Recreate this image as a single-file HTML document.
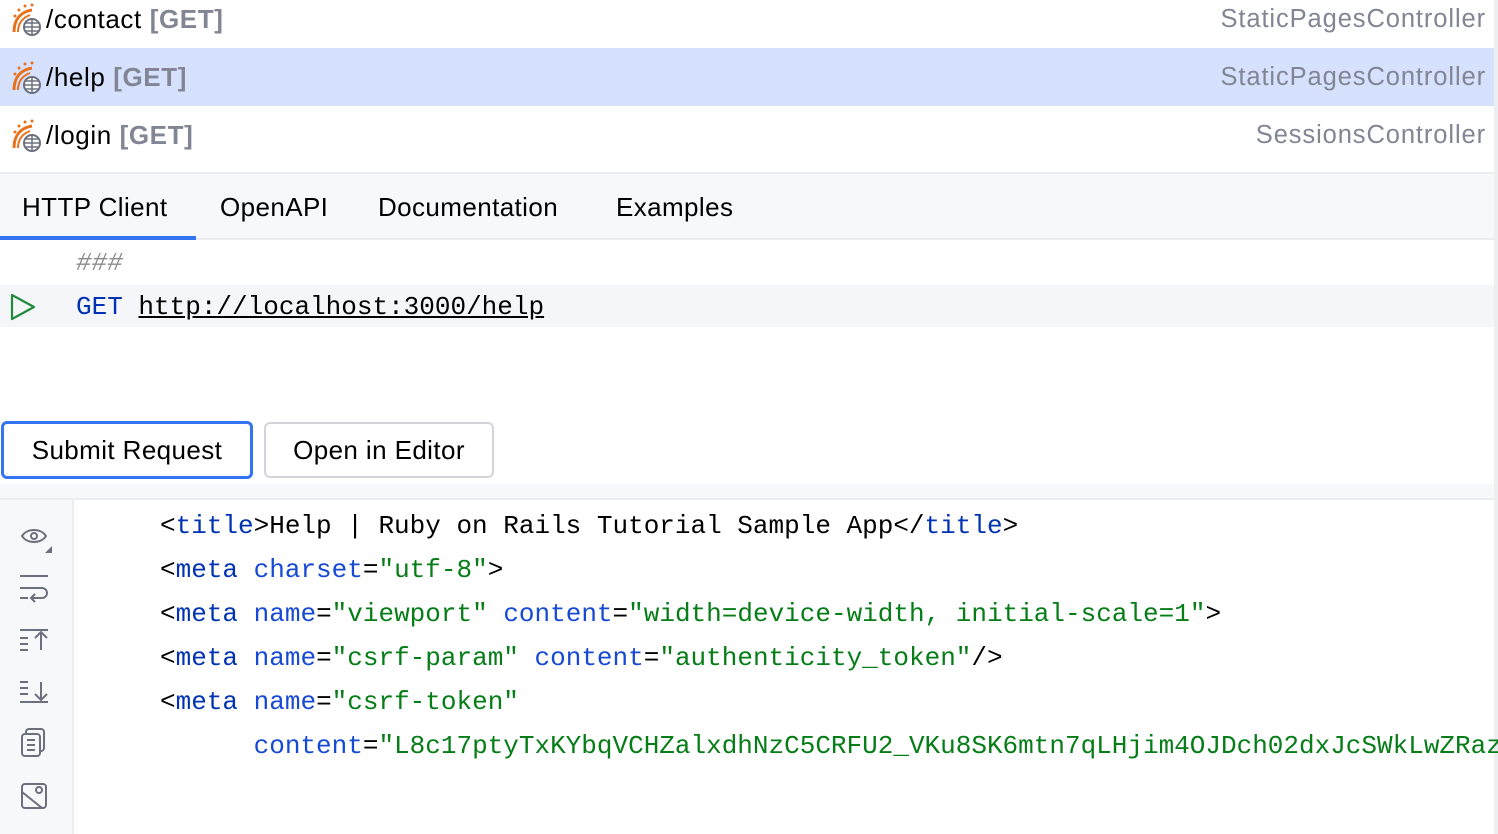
<!DOCTYPE html><html><head><style>
*{margin:0;padding:0;box-sizing:border-box}
body{width:1498px;height:834px;overflow:hidden;background:#fff;font-family:"Liberation Sans",sans-serif;position:relative}
.abs{position:absolute}
.row{position:absolute;left:0;width:1494px;height:58px}
.rt{position:absolute;left:46px;font-size:26px;color:#000;line-height:30px;letter-spacing:0.6px}
.rt b{font-weight:bold;color:#818594}
.ctl{position:absolute;right:8px;font-size:25.5px;color:#818594;line-height:30px;letter-spacing:0.9px}
.mono{font-family:"Liberation Mono",monospace;font-size:26px;line-height:30px;white-space:pre}
.tag{color:#0033b3}.att{color:#174ad4}.str{color:#067d17}
.ic{position:absolute;left:10px}
.tab{position:absolute;top:192px;font-size:26px;line-height:30px;letter-spacing:0.4px}
</style></head><body>
<div class="abs" style="left:1494px;top:0;width:4px;height:834px;background:#eceef2"></div>
<div class="row" style="top:-10px"><svg class="ic" style="top:12px" width="32" height="34" viewBox="0 0 32 34"><path d="M4 30 C4 18 10 10 22 8" stroke="#e8711c" stroke-width="3" fill="none"/><path d="M8 30C8 22 12 16 20 13" stroke="#e8711c" stroke-width="2" fill="none"/><circle cx="5" cy="14" r="1.5" fill="#e8711c"/><circle cx="9" cy="8" r="1.5" fill="#e8711c"/><circle cx="15" cy="4" r="1.5" fill="#e8711c"/><circle cx="22" cy="3" r="1.5" fill="#e8711c"/><circle cx="22" cy="25" r="8" fill="#fff" stroke="#6c707e" stroke-width="2"/><path d="M14 25h16M22 17v16M16 21h12M16 29h12" stroke="#6c707e" stroke-width="1.5"/></svg><div class="rt" style="top:14px">/contact <b>[GET]</b></div><div class="ctl" style="top:14px">StaticPagesController</div></div>
<div class="row" style="top:48px;background:#d5e1fd"><svg class="ic" style="top:12px" width="32" height="34" viewBox="0 0 32 34"><path d="M4 30 C4 18 10 10 22 8" stroke="#e8711c" stroke-width="3" fill="none"/><path d="M8 30C8 22 12 16 20 13" stroke="#e8711c" stroke-width="2" fill="none"/><circle cx="5" cy="14" r="1.5" fill="#e8711c"/><circle cx="9" cy="8" r="1.5" fill="#e8711c"/><circle cx="15" cy="4" r="1.5" fill="#e8711c"/><circle cx="22" cy="3" r="1.5" fill="#e8711c"/><circle cx="22" cy="25" r="8" fill="#fff" stroke="#6c707e" stroke-width="2"/><path d="M14 25h16M22 17v16M16 21h12M16 29h12" stroke="#6c707e" stroke-width="1.5"/></svg><div class="rt" style="top:14px">/help <b>[GET]</b></div><div class="ctl" style="top:14px">StaticPagesController</div></div>
<div class="row" style="top:106px"><svg class="ic" style="top:12px" width="32" height="34" viewBox="0 0 32 34"><path d="M4 30 C4 18 10 10 22 8" stroke="#e8711c" stroke-width="3" fill="none"/><path d="M8 30C8 22 12 16 20 13" stroke="#e8711c" stroke-width="2" fill="none"/><circle cx="5" cy="14" r="1.5" fill="#e8711c"/><circle cx="9" cy="8" r="1.5" fill="#e8711c"/><circle cx="15" cy="4" r="1.5" fill="#e8711c"/><circle cx="22" cy="3" r="1.5" fill="#e8711c"/><circle cx="22" cy="25" r="8" fill="#fff" stroke="#6c707e" stroke-width="2"/><path d="M14 25h16M22 17v16M16 21h12M16 29h12" stroke="#6c707e" stroke-width="1.5"/></svg><div class="rt" style="top:14px">/login <b>[GET]</b></div><div class="ctl" style="top:14px">SessionsController</div></div>
<div class="abs" style="left:0;top:172px;width:1494px;height:68px;background:#f7f8fa;border-top:2px solid #ebecf0;border-bottom:2px solid #ebecf0"></div>
<div class="abs" style="left:0;top:236px;width:196px;height:4px;background:#3574f0"></div>
<div class="tab" style="left:22px">HTTP Client</div>
<div class="tab" style="left:220px">OpenAPI</div>
<div class="tab" style="left:378px">Documentation</div>
<div class="tab" style="left:616px">Examples</div>
<div class="abs mono" style="top:248px;left:76px;color:#8c8c8c;font-style:italic">###</div>
<div class="abs" style="left:0;top:285px;width:1494px;height:42px;background:#f5f6f9"></div>
<svg class="abs" style="left:9px;top:292px" width="28" height="30"><path d="M3 3L25 15L3 27Z" fill="none" stroke="#208a3c" stroke-width="2.2" stroke-linejoin="round"/></svg>
<div class="abs mono" style="top:292px;left:76px"><span class="tag">GET</span> <span style="text-decoration:underline">http://localhost:3000/help</span></div>
<div class="abs" style="left:1px;top:421px;width:252px;height:58px;border:3px solid #3574f0;border-radius:6px;font-size:26px;text-align:center;line-height:52px;letter-spacing:0.4px">Submit Request</div>
<div class="abs" style="left:264px;top:422px;width:230px;height:56px;border:2px solid #d3d5db;border-radius:6px;font-size:26px;text-align:center;line-height:52px;letter-spacing:0.4px">Open in Editor</div>
<div class="abs" style="left:0;top:484px;width:1494px;height:16px;background:#f7f8fa;border-bottom:2px solid #ebecf0"></div>
<div class="abs" style="left:0;top:500px;width:74px;height:334px;background:#f7f8fa;border-right:2px solid #ebecf0"></div>
<svg class="abs" style="left:18px;top:520px" width="36" height="300" viewBox="0 0 36 300" fill="none" stroke="#6c707e" stroke-width="2">
<path d="M4 16C9 8 23 8 28 16C23 24 9 24 4 16Z"/><circle cx="16" cy="16" r="3"/><path d="M34 26v7h-7Z" fill="#6c707e" stroke="none"/>
<path d="M2 56h28M2 68h22a5 5 0 0 1 0 10h-10M17 74l-4 4 4 4M2 78h8"/>
<path d="M2 110h28M2 118h8M2 124h8M2 130h8M23 112v18M17 118l6-6 6 6"/>
<path d="M2 162h8M2 168h8M2 174h8M2 182h28M23 162v18M17 174l6 6 6-6"/>
<rect x="4" y="214" width="18" height="22" rx="3"/><path d="M8 214v-2a3 3 0 0 1 3-3h12a3 3 0 0 1 3 3v16a3 3 0 0 1-3 3M9 220h8M9 225h8M9 230h8"/>
<rect x="4" y="264" width="24" height="24" rx="3"/><path d="M4 272l20 16"/><circle cx="21" cy="270" r="3"/>
</svg>
<div class="abs mono" style="top:504px;left:160px;line-height:44px"><span>&lt;<span class="tag">title</span>&gt;Help | Ruby on Rails Tutorial Sample App&lt;/<span class="tag">title</span>&gt;</span>
&lt;<span class="tag">meta</span> <span class="att">charset</span>=<span class="str">"utf-8"</span>&gt;
&lt;<span class="tag">meta</span> <span class="att">name</span>=<span class="str">"viewport"</span> <span class="att">content</span>=<span class="str">"width=device-width, initial-scale=1"</span>&gt;
&lt;<span class="tag">meta</span> <span class="att">name</span>=<span class="str">"csrf-param"</span> <span class="att">content</span>=<span class="str">"authenticity_token"</span>/&gt;
&lt;<span class="tag">meta</span> <span class="att">name</span>=<span class="str">"csrf-token"</span>
      <span class="att">content</span>=<span class="str">"L8c17ptyTxKYbqVCHZalxdhNzC5CRFU2_VKu8SK6mtn7qLHjim4OJDch02dxJcSWkLwZRaz</span></div>
</body></html>
